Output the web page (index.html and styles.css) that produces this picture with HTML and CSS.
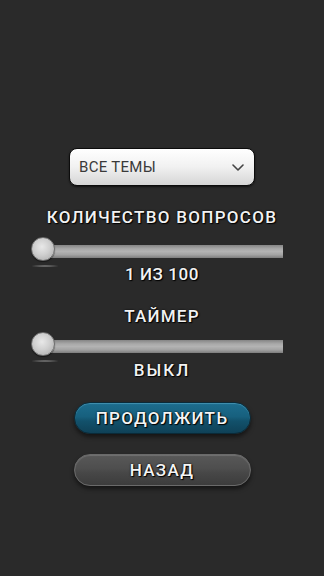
FILE: index.html
```html
<!DOCTYPE html>
<html lang="ru">
<head>
    <meta charset="UTF-8">
    <meta name="viewport" content="width=device-width, initial-scale=1.0">
    <title>Настройки игры</title>
    <link rel="stylesheet" href="styles.css">
</head>
<body>
    <div class="screen">
        <div class="select-box">
            <span class="select-text">ВСЕ ТЕМЫ</span>
            <svg class="chevron" width="12" height="7" viewBox="0 0 12 7">
                <polyline points="1,1 6,6 11,1" fill="none" stroke="#444" stroke-width="1.6" stroke-linecap="round" stroke-linejoin="round"/>
            </svg>
        </div>

        <div class="label label-questions">КОЛИЧЕСТВО ВОПРОСОВ</div>
        <div class="slider slider-questions">
            <div class="track"></div>
            <div class="thumb"></div>
        </div>
        <div class="label value-questions">1 ИЗ 100</div>

        <div class="label label-timer">ТАЙМЕР</div>
        <div class="slider slider-timer">
            <div class="track"></div>
            <div class="thumb"></div>
        </div>
        <div class="label value-timer">ВЫКЛ</div>

        <button class="pill-button blue-button">ПРОДОЛЖИТЬ</button>
        <button class="pill-button gray-button">НАЗАД</button>
    </div>
</body>
</html>
```

FILE: styles.css
```css
body {
    margin: 0;
    background-color: #2a2a2a;
    font-family: Roboto, "Liberation Sans", sans-serif;
}
.screen {
    display: flex;
    flex-direction: column;
    align-items: center;
    padding-top: 148px;
    min-height: 576px;
    box-sizing: border-box;
}
.select-box {
    width: 186px;
    height: 38px;
    box-sizing: border-box;
    display: flex;
    align-items: center;
    justify-content: space-between;
    padding: 0 10px 0 9px;
    background: linear-gradient(#ffffff, #f1f1f1 50%, #d6d6d6);
    border: 1px solid #0c0c0c;
    border-radius: 8px;
    box-shadow: 0 1px 2px rgba(0, 0, 0, 0.6);
}
.select-text {
    font-size: 15px;
    color: #3a3a3a;
    letter-spacing: 0.3px;
}
.chevron {
    display: block;
}
.label {
    font-size: 17px;
    font-weight: 500;
    line-height: 20px;
    color: #f2f2f2;
    letter-spacing: 1.2px;
    text-shadow: 1px 1px 1px #000, 0 0 2px #000;
}
.label-questions {
    margin-top: 21px;
    letter-spacing: 1.3px;
}
.slider {
    position: relative;
    align-self: flex-start;
    margin-left: 31px;
    width: 252px;
    height: 24px;
}
.slider-questions {
    margin-top: 10px;
}
.slider-timer {
    margin-top: 6px;
}
.track {
    margin-left: 12px;
    margin-top: 8px;
    height: 13px;
    background: linear-gradient(#858585, #a9a9a9 30%, #b3b3b3 50%, #a3a3a3 75%, #7d7d7d);
}
.thumb {
    position: absolute;
    left: 0;
    top: 0;
    width: 24px;
    height: 24px;
    box-sizing: border-box;
    border-radius: 50%;
    border: 1px solid #6e6e6e;
    background: radial-gradient(circle at 45% 40%, #e8e8e8, #cfcfcf 45%, #bdbdbd 70%, #dcdcdc 85%, #9a9a9a);
    box-shadow: 0 1px 1px rgba(0, 0, 0, 0.5);
}
.thumb::after {
    content: "";
    position: absolute;
    left: 0;
    top: 27px;
    width: 26px;
    height: 2px;
    border-radius: 50%;
    background: radial-gradient(ellipse, rgba(200, 200, 200, 0.55), rgba(200, 200, 200, 0));
}
.value-questions {
    margin-top: 3px;
    letter-spacing: 0.6px;
}
.label-timer {
    margin-top: 22px;
}
.value-timer {
    margin-top: 4px;
    letter-spacing: 2px;
}
.pill-button {
    width: 177px;
    height: 32px;
    border-radius: 16px;
    font-family: Roboto, "Liberation Sans", sans-serif;
    font-size: 17px;
    font-weight: 500;
    letter-spacing: 1.3px;
    color: #f4f4f4;
    text-shadow: 1px 1px 1px #000, 0 0 2px #000;
    padding: 0;
    cursor: pointer;
}
.blue-button {
    margin-top: 22px;
    border: 1px solid #0a2a38;
    background: linear-gradient(#1d6d8e, #17607e 45%, #12516b 60%, #0f4157);
    box-shadow: inset 0 1px 1px rgba(120, 200, 230, 0.4), 0 3px 4px rgba(0, 0, 0, 0.5);
}
.gray-button {
    margin-top: 20px;
    border: 1px solid #6a6a6a;
    background: linear-gradient(#585858, #4e4e4e 45%, #474747 60%, #3c3c3c);
    box-shadow: inset 0 1px 1px rgba(255, 255, 255, 0.15), 0 3px 4px rgba(0, 0, 0, 0.5);
}
```
